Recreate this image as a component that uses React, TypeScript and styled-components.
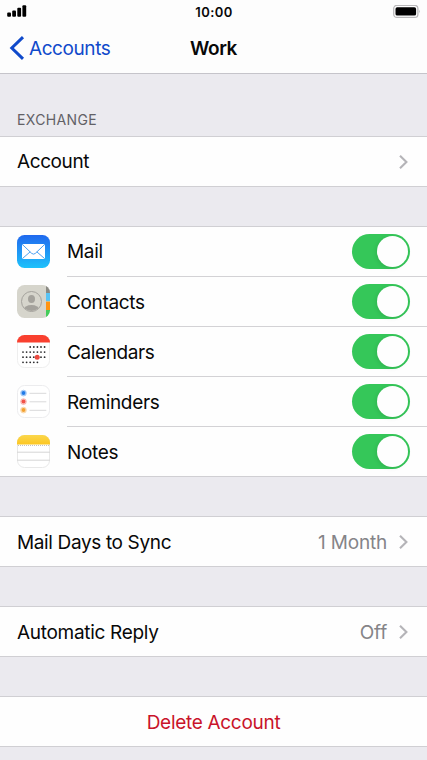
import React, { useState } from 'react';
import styled, { createGlobalStyle } from 'styled-components';

const GlobalStyle = createGlobalStyle`
  * { box-sizing: border-box; }
  body { margin: 0; background: #ebeaef; font-family: Inter, "Liberation Sans", sans-serif; }
`;

const Screen = styled.main`
  width: 427px;
  height: 760px;
  overflow: hidden;
  background: #ebeaef;
  color: #080808;
`;

const Header = styled.header`
  height: 74px;
  background: #fdfdfd;
  border-bottom: 1px solid #c5c4ca;
`;

const StatusBar = styled.div`
  height: 23px;
  padding: 0 6px 0 7px;
  display: grid;
  grid-template-columns: 1fr auto 1fr;
  align-items: center;
`;

const Time = styled.span`
  padding-top: 1px;
  font-size: 13px;
  font-weight: 600;
  line-height: 22px;
  letter-spacing: 0.45px;
`;

const SignalIcon = styled.svg`
  margin-bottom: 1px;
`;

const BatteryIcon = styled.svg`
  justify-self: end;
`;

const NavBar = styled.nav`
  height: 50px;
  display: grid;
  grid-template-columns: 1fr auto 1fr;
  align-items: center;
  padding: 0 9px;
`;

const BackButton = styled.button`
  display: flex;
  align-items: center;
  gap: 4px;
  padding: 0;
  border: 0;
  background: none;
  color: #104acb;
  font: 400 19px/24px Inter, sans-serif;
  letter-spacing: -0.42px;
`;

const BackLabel = styled.span`
  padding-top: 2px;
`;

const Title = styled.h1`
  margin: 0;
  padding-top: 2px;
  font-size: 19px;
  font-weight: 600;
  line-height: 24px;
  letter-spacing: -0.45px;
`;

const SectionTitle = styled.h2`
  height: 62px;
  margin: 0;
  padding: 36px 17px 0;
  font-size: 14px;
  font-weight: 400;
  line-height: 20px;
  letter-spacing: 0.35px;
  color: #626166;
`;

const Group = styled.section`
  background: #fefefe;
  border: solid #d0cfd3;
  border-width: 1px 0;
  margin-bottom: 39px;
`;

const Row = styled.div`
  height: 49px;
  display: flex;
  align-items: center;
  padding: 0 19px 0 17px;
`;

const ServiceRow = styled.div`
  display: flex;
  align-items: center;
  padding-left: 17px;
  gap: 17px;

  & + & > div { border-top: 1px solid #d3d2d5; height: 50px; }
`;

const ServiceBody = styled.div`
  flex: 1;
  height: 49px;
  display: flex;
  align-items: center;
  padding-right: 17px;
`;

const Label = styled.span<{ $tracking?: number; $drop?: number }>`
  flex: 1;
  padding-top: ${({ $drop = 0 }) => $drop}px;
  font-size: 19px;
  line-height: 24px;
  letter-spacing: ${({ $tracking = -0.33 }) => $tracking}px;
`;

const Value = styled.span`
  margin-right: 12px;
  padding-top: 2px;
  color: #858488;
  font-size: 19px;
  line-height: 24px;
  letter-spacing: -0.2px;
`;

const Toggle = styled.button<{ $on: boolean }>`
  width: 58px;
  height: 35px;
  padding: 2px;
  display: flex;
  justify-content: ${({ $on }) => ($on ? 'flex-end' : 'flex-start')};
  border: 0;
  border-radius: 18px;
  background: ${({ $on }) => ($on ? '#35c759' : '#e6e6e8')};
`;

const Knob = styled.span`
  width: 31px;
  height: 31px;
  border-radius: 50%;
  background: #fefefe;
  box-shadow: -1px 1px 4px rgba(0, 0, 0, 0.1);
`;

const DeleteButton = styled.button`
  display: block;
  width: 100%;
  height: 49px;
  padding: 2px 0 0;
  border: 0;
  background: none;
  color: #c9142a;
  font: 400 19px/24px Inter, sans-serif;
  letter-spacing: -0.3px;
`;

const Chevron = () => (
  <svg width="9" height="16" viewBox="0 0 9 16" fill="none">
    <path d="M1 1.8 7.4 8 1 14.2" stroke="#b5b4b8" strokeWidth="2.1" />
  </svg>
);

const MailIcon = () => (
  <svg width="33" height="33" viewBox="0 0 33 33">
    <defs>
      <linearGradient id="sky" x1="0" y1="0" x2="0" y2="1">
        <stop stopColor="#2068ee" />
        <stop offset="1" stopColor="#1dc2fb" />
      </linearGradient>
    </defs>
    <rect width="33" height="33" rx="7.5" fill="url(#sky)" />
    <rect x="5" y="9" width="23" height="15" rx="1.6" fill="#fff" />
    <path d="m5.5 9.6 9.2 8.8q1.8 1.5 3.6 0l9.2-8.8M5.6 23.4l7.6-6.6M27.4 23.4l-7.6-6.6" fill="none" stroke="#3795ee" strokeWidth=".9" />
  </svg>
);

const ContactsIcon = () => (
  <svg width="33" height="33" viewBox="0 0 33 33">
    <defs>
      <clipPath id="book"><rect width="33" height="33" rx="7.5" /></clipPath>
      <clipPath id="portrait"><circle cx="14.5" cy="16.5" r="9.4" /></clipPath>
    </defs>
    <g clipPath="url(#book)">
      <path fill="#d6d5cc" d="M0 0h29v33H0z" />
      <path fill="#8b8a83" d="M29 0h4v8h-4z" />
      <path fill="#5ac4f4" d="M29 8h4v8.5h-4z" />
      <path fill="#ff9412" d="M29 16.5h4V25h-4z" />
      <path fill="#43cc59" d="M29 25h4v8h-4z" />
    </g>
    <circle cx="14.5" cy="16.5" r="10" fill="none" stroke="#a4a29c" />
    <g clipPath="url(#portrait)" fill="#a4a29c">
      <ellipse cx="14.5" cy="14" rx="3.5" ry="4.1" />
      <ellipse cx="14.5" cy="25" rx="8" ry="5" />
    </g>
  </svg>
);

const calendarDots = [
  [13.2, 16.8, 20.4, 24, 27.6],
  [6, 9.6, 13.2, 16.8, 20.4, 24, 27.6],
  [6, 9.6, 13.2, 16.8, 20.4, 24, 27.6],
  [6, 9.6, 13.2, 16.8, 20.4],
];

const CalendarIcon = () => (
  <svg width="33" height="33" viewBox="0 0 33 33">
    <defs><clipPath id="sheet"><rect width="33" height="33" rx="7.5" /></clipPath></defs>
    <rect x=".5" y=".5" width="32" height="32" rx="7" fill="#fff" stroke="#eeeeee" />
    <path clipPath="url(#sheet)" fill="#f9402f" d="M0 0h33v7.5H0z" />
    {calendarDots.map((row, y) => row.map((x) => (
      <circle key={`${x}-${y}`} cx={x} cy={12 + y * 5.1} r=".9" fill="#2d2d2f" />
    )))}
    <circle cx="20.2" cy="22.3" r="2.5" fill="#ec4a40" />
  </svg>
);

const RemindersIcon = () => (
  <svg width="33" height="33" viewBox="0 0 33 33">
    <rect x=".5" y=".5" width="32" height="32" rx="7" fill="#fff" stroke="#ececee" />
    {['#227be8', '#f15349', '#f3a130'].map((color, i) => (
      <g key={color}>
        <circle cx="6.5" cy={8.1 + i * 8.5} r="2.9" fill={color} fillOpacity=".22" stroke={color} strokeOpacity=".55" strokeWidth=".6" />
        <circle cx="6.5" cy={8.1 + i * 8.5} r="2" fill={color} />
        <path d={`M12.5 ${8.3 + i * 8.5}H29.3`} stroke="#d9d9da" />
      </g>
    ))}
  </svg>
);

const NotesIcon = () => (
  <svg width="33" height="33" viewBox="0 0 33 33">
    <defs>
      <clipPath id="pad"><rect width="33" height="33" rx="7.5" /></clipPath>
      <linearGradient id="gold" x1="0" y1="0" x2="0" y2="1">
        <stop stopColor="#fbd74c" />
        <stop offset="1" stopColor="#fcc622" />
      </linearGradient>
    </defs>
    <rect x=".5" y=".5" width="32" height="32" rx="7" fill="#fff" stroke="#e8e8e8" />
    <path clipPath="url(#pad)" fill="url(#gold)" d="M0 0h33v9.5H0z" />
    <path d="M1 10.5h31" stroke="#c4c3bd" strokeDasharray="1 1" />
    <path d="M0 17.2h33M0 25.2h33" stroke="#d6d6d6" />
  </svg>
);

const services = [
  { name: 'Mail', Icon: MailIcon, drop: 1 },
  { name: 'Contacts', Icon: ContactsIcon },
  { name: 'Calendars', Icon: CalendarIcon, tracking: -0.4 },
  { name: 'Reminders', Icon: RemindersIcon },
  { name: 'Notes', Icon: NotesIcon },
];

interface ServiceProps {
  name: string;
  Icon: React.ComponentType;
  tracking?: number;
  drop?: number;
}

const Service = ({ name, Icon, tracking, drop = 2 }: ServiceProps) => {
  const [on, setOn] = useState(true);
  return (
    <ServiceRow>
      <Icon />
      <ServiceBody>
        <Label $drop={drop} $tracking={tracking}>{name}</Label>
        <Toggle $on={on} role="switch" aria-checked={on} aria-label={name} onClick={() => setOn(!on)}>
          <Knob />
        </Toggle>
      </ServiceBody>
    </ServiceRow>
  );
};

export default function App() {
  return (
    <Screen>
      <GlobalStyle />
      <Header>
        <StatusBar>
          <SignalIcon width="20" height="12" viewBox="0 0 20 12">
            <rect x="0.2" y="7.6" width="3.8" height="4.2" rx="1" />
            <rect x="5.2" y="5.4" width="3.8" height="6.4" rx="1" />
            <rect x="10.3" y="2.8" width="3.8" height="9" rx="1" />
            <rect x="15.4" y="0.2" width="3.8" height="11.6" rx="1" />
          </SignalIcon>
          <Time>10:00</Time>
          <BatteryIcon width="28" height="14" viewBox="0 0 28 14">
            <rect x=".7" y=".4" width="24.2" height="12" rx="3.2" fill="#fff" stroke="#b9b8ba" strokeWidth="1.3" />
            <rect x="2.5" y="2.2" width="20.6" height="8.4" rx="1.7" />
            <path d="M26 4.5q1.6 1.9 0 3.8Z" fill="#b9b8ba" />
          </BatteryIcon>
        </StatusBar>
        <NavBar>
          <BackButton>
            <svg width="16" height="26" viewBox="0 0 16 26" fill="none">
              <path d="M14 2.2 2.8 13 14 23.8" stroke="#104acb" strokeWidth="3" />
            </svg>
            <BackLabel>Accounts</BackLabel>
          </BackButton>
          <Title>Work</Title>
        </NavBar>
      </Header>
      <SectionTitle>EXCHANGE</SectionTitle>
      <Group>
        <Row><Label $tracking={-0.4}>Account</Label><Chevron /></Row>
      </Group>
      <Group>
        {services.map((service) => <Service key={service.name} {...service} />)}
      </Group>
      <Group>
        <Row><Label $drop={2} $tracking={-0.36}>Mail Days to Sync</Label><Value>1 Month</Value><Chevron /></Row>
      </Group>
      <Group>
        <Row><Label $drop={2} $tracking={-0.3}>Automatic Reply</Label><Value>Off</Value><Chevron /></Row>
      </Group>
      <Group>
        <DeleteButton>Delete Account</DeleteButton>
      </Group>
    </Screen>
  );
}
